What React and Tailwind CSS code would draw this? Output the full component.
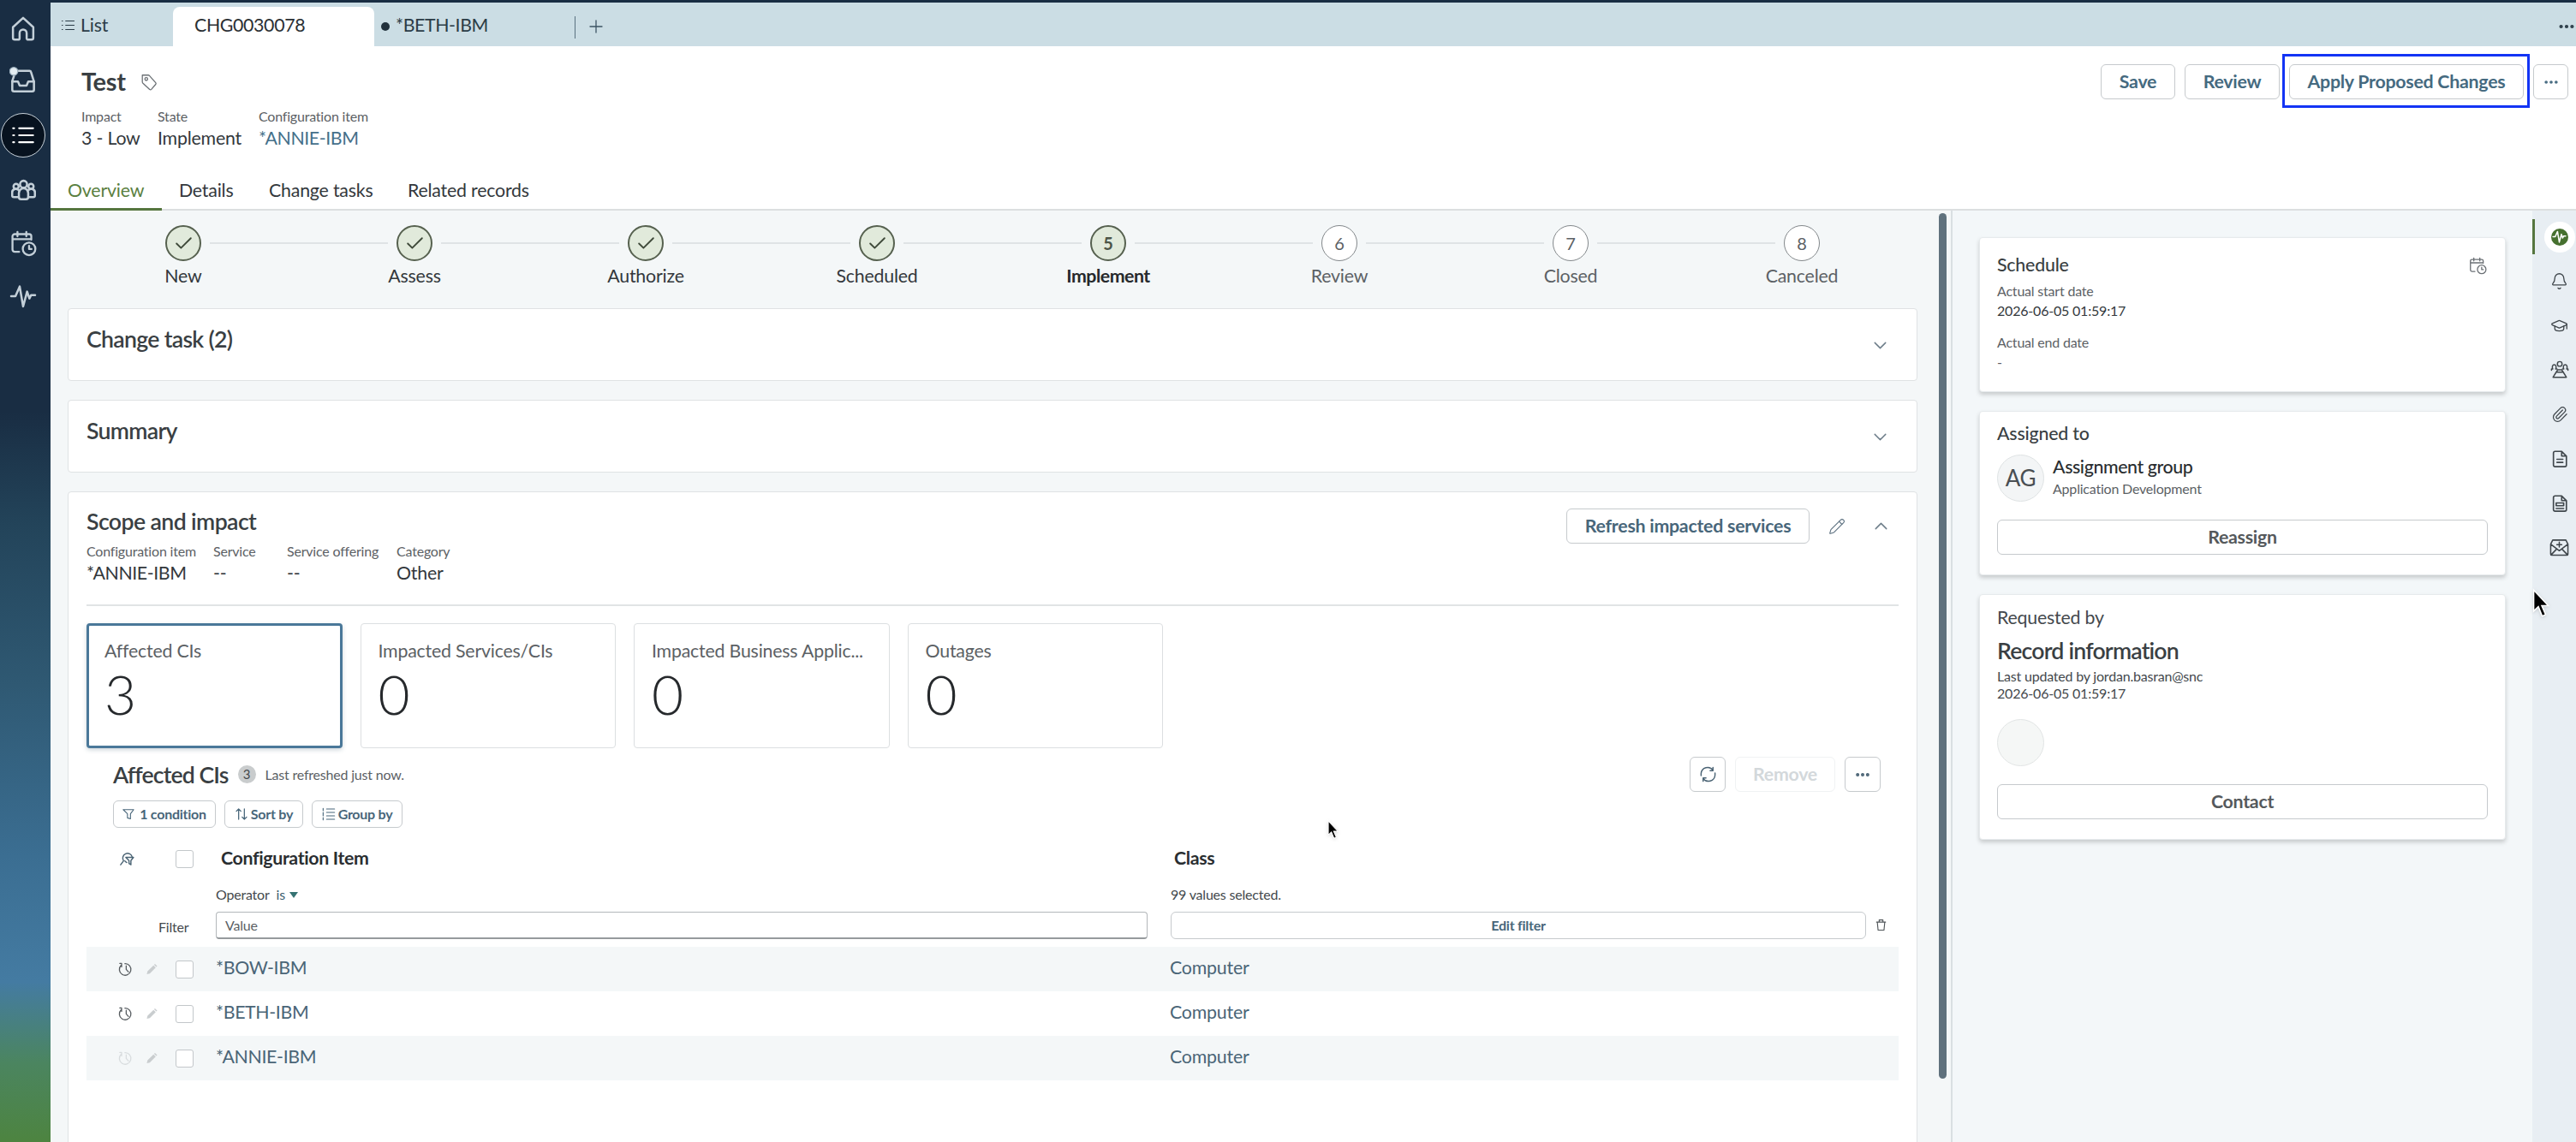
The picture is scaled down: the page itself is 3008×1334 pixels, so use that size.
import clsx from 'clsx';
import {
  Bell,
  Check,
  ChevronDown,
  ChevronUp,
  Ellipsis,
  GraduationCap,
  Paperclip,
  Pencil,
  Plus,
} from 'lucide-react';

const steps = [
  { label: 'New', state: 'done' },
  { label: 'Assess', state: 'done' },
  { label: 'Authorize', state: 'done' },
  { label: 'Scheduled', state: 'done' },
  { label: 'Implement', state: 'current' },
  { label: 'Review', state: 'next' },
  { label: 'Closed', state: 'next' },
  { label: 'Canceled', state: 'next' },
];

const counters = [
  { label: 'Affected CIs', value: 3, active: true },
  { label: 'Impacted Services/CIs', value: 0 },
  { label: 'Impacted Business Applic...', value: 0 },
  { label: 'Outages', value: 0 },
];

const rows = [
  { name: '*BOW-IBM', type: 'Computer', history: true },
  { name: '*BETH-IBM', type: 'Computer', history: true },
  { name: '*ANNIE-IBM', type: 'Computer', history: false },
];

/* Icons */
const Svg = ({ className, size = 24, width = 1.6, children, ...rest }) => (
  <svg
    className={clsx('shrink-0', className)}
    width={size}
    height={size}
    viewBox="0 0 24 24"
    fill="none"
    stroke="currentColor"
    strokeWidth={width}
    strokeLinecap="round"
    strokeLinejoin="round"
    {...rest}
  >
    {children}
  </svg>
);

const HomeIcon = () => (
  <Svg size={30} width={2}>
    <path d="M2.5 10.2 12 1.5l9.500 8.700v10a1.600 1.600 0 0 1-1.600 1.600h-3.300a1.300 1.300 0 0 1-1.300-1.300v-4.800a3.300 3.300 0 0 0-6.600 0v4.800a1.300 1.300 0 0 1-1.300 1.300H4.100a1.600 1.600 0 0 1-1.600-1.600z" />
  </Svg>
);

const InboxIcon = () => (
  <Svg size={32} width={1.9}>
    <path d="M8 3.500h9.500a1.400 1.400 0 0 1 1.400 1.100L21.500 13v7a1.500 1.500 0 0 1-1.500 1.500H4A1.500 1.500 0 0 1 2.500 20V12.500L4 8" />
    <path d="M2.500 13h5l1.500 3.500h6l1.500-3.500h5" />
    <circle cx="3.800" cy="4" r="3.500" fill="#e4edf2" stroke="#9fb2c0" strokeWidth="1" />
  </Svg>
);

const ListIcon = ({ size = 30, width = 1.9 }) => (
  <Svg size={size} width={width}>
    <path d="M8 5h14M8 12h14M8 19h14M2 5h1M2 12h1M2 19h1" />
  </Svg>
);

const TeamIcon = () => (
  <Svg size={29} width={2.1}>
    <circle cx="12" cy="6" r="3.400" />
    <circle cx="4.800" cy="8" r="2.500" />
    <circle cx="19.200" cy="8" r="2.500" />
    <path d="M7.500 18.500V14.500a4.500 4.500 0 0 1 9 0v4a2 2 0 0 1-2 2h-5a2 2 0 0 1-2-2zM7.500 18.500H2.500a1.500 1.500 0 0 1-1.500-1.500v-2.500a3.600 3.600 0 0 1 7-1.500M16.500 18.500h5a1.500 1.500 0 0 0 1.500-1.500v-2.500a3.600 3.600 0 0 0-7-1.500" />
  </Svg>
);

const CalendarClockIcon = ({ size = 31, width = 1.8 }) => (
  <Svg size={size} width={width}>
    <path d="M8 19.500H4a2 2 0 0 1-2-2V5.500a2 2 0 0 1 2-2h13a2 2 0 0 1 2 2V8.500M2 8h17M6.500 1.500v4M14.500 1.500v4" />
    <circle cx="17" cy="16.800" r="5.700" />
    <path d="M17 14V17h2.200" />
  </Svg>
);

const PulseIcon = ({ size = 32, width = 1.9 }) => (
  <Svg size={size} width={width}>
    <path d="M1.500 12h3.800L9 3.500l3 17.500 3.500-13 2 6 1.500-3h3.500" />
  </Svg>
);

const TagIcon = () => (
  <Svg size={22} width={1.4} className="text-[#6b7075]">
    <path d="M3.500 3h7.500a2 2 0 0 1 1.500.700l8 9a1.500 1.500 0 0 1 0 2l-5.500 6.500a1.500 1.500 0 0 1-2.200 0L4 13a2 2 0 0 1-.500-1.300z" />
    <circle cx="8.500" cy="8" r="1.800" />
  </Svg>
);

const HistoryIcon = () => (
  <Svg size={18} width={1.7}>
    <path d="M10.500 3.600A9 9 0 1 1 4.700 6M2.500 3.300 5.300 3.300 5.300 8.500M12.500 7v5.500l3.500 4" />
  </Svg>
);

const SearchFilterIcon = () => (
  <Svg size={18} width={1.9}>
    <path d="M2.500 21.500l4.500-6A7.500 7.500 0 1 1 20.500 9.500" />
    <path d="M10.500 10h12l-4 5v6.500l-3-2V15zM9 15.500c1 1.500 1.700 2 3 2.500" />
  </Svg>
);

const GroupRailIcon = () => (
  <Svg size={22} width={1.6}>
    <circle cx="12" cy="4.500" r="3" />
    <path d="M9.500 12h5M7.500 15h9l4 6.500H3.500zM9.500 12 7.500 15M14.500 12l2 3" />
    <path d="M1.500 12.500V11h1.700C1.700 8 3 5.500 5 5.500S8.200 8 6.800 11h1.700M22.500 12.500V11h-1.700C22.300 8 21 5.500 19 5.500S15.800 8 17.200 11h-1.700" />
  </Svg>
);

const DocIcon = ({ table }) => (
  <Svg size={22} width={1.8}>
    <path d="M6 2.500h8.500l6 6V20a2 2 0 0 1-2 2H6a2 2 0 0 1-2-2V4.500a2 2 0 0 1 2-2zM14.500 2.500v6h6" />
    {table ? <path d="M7.500 11.500h9.500v3.500H7.500zM7.500 18.500h9.500" /> : <path d="M8.500 12.500h7.500M8.500 16.500h7.500" />}
  </Svg>
);

const MailPlusIcon = () => (
  <Svg size={23} width={1.6}>
    <path d="M1.500 8v12a1.500 1.500 0 0 0 1.500 1.500h18a1.500 1.500 0 0 0 1.500-1.500V8L20 3H4zM1.500 8 12 16 22.500 8M2 21 9 13.700M22 21l-7-7.300M12 5.500v6M9 8.500h6" />
  </Svg>
);

const Cursor = ({ className }) => (
  <svg className={className} viewBox="0 0 20 34" fill="#000" stroke="#fff" strokeWidth="1.500">
    <path d="M1.500 2v23.500l5.200-5 4.300 10.500 3.800-1.700-4.300-10h7.300z" />
  </svg>
);

const Button = ({ className, children }) => (
  <button
    className={clsx(
      'flex items-center justify-center border border-[#c6cacd] bg-white font-bold tracking-[-0.25px]',
      className
    )}
  >
    {children}
  </button>
);

const Meta = ({ label, value, className, valueClass }) => (
  <div className={className}>
    <p className="text-base leading-5 text-[#5c6165]">{label}</p>
    <p className={clsx('mt-[1px] text-[21.33px] leading-7', valueClass || 'text-[#33383c]')}>{value}</p>
  </div>
);

const Checkbox = () => (
  <span className="block h-[21px] w-[21px] rounded-[3px] border border-[#c3c7ca] bg-white" />
);

const Sidebar = () => (
  <aside className="flex w-[59px] shrink-0 flex-col items-center bg-[linear-gradient(180deg,#192d43_0%,#192d43_36%,#23445a_46%,#2f5973_60%,#3b6e92_75%,#447ba2_86%,#4b8560_93%,#4d8440_100%)] pr-[5px] text-[#c3cfd8]">
    <div className="flex h-[66px] items-center pt-0.5"><HomeIcon /></div>
    <div className="flex h-[56px] items-center"><InboxIcon /></div>
    <div className="mt-[10px] flex h-[52px] w-[52px] items-center justify-center rounded-full border-[1.5px] border-[#c8d2da] bg-[#07121f] text-white">
      <ListIcon size={28} />
    </div>
    <div className="mt-[9px] flex h-[58px] items-center"><TeamIcon /></div>
    <div className="flex h-[66px] items-center"><CalendarClockIcon /></div>
    <div className="flex h-[58px] items-center"><PulseIcon /></div>
  </aside>
);

const TabStrip = () => (
  <div className="flex h-[54px] border-t-[3px] border-[#192d43] bg-[#cbdde4] text-[21.33px] text-[#2b3c47]">
    <div className="flex w-[143px] items-center gap-[6px] pt-0.5 pl-3 text-[#2b3c47]">
      <ListIcon size={17} width={1.5} />
      <span>List</span>
    </div>
    <div className="mt-[5px] flex w-[235px] items-center rounded-t-lg bg-white pb-[3px] pl-[25px] tracking-[-0.35px] text-[#2b3034]">
      CHG0030078
    </div>
    <div className="flex w-[234px] items-center pt-0.5 pl-2">
      <span className="mt-0.5 mr-[7px] h-[10px] w-[10px] rounded-full bg-[#22313c]" />
      <span className="tracking-[-0.4px]">*BETH-IBM</span>
    </div>
    <div className="mt-[16px] h-[26px] w-px bg-[#5b7180]" />
    <Plus size={24} strokeWidth={1.3} className="mt-[16px] ml-[12px] text-[#3d5463]" />
    <Ellipsis size={22} strokeWidth={2.6} className="mt-[17px] ml-auto" />
  </div>
);

const RecordHeader = () => (
  <header className="h-[192px] border-b-2 border-[#dcdfe0] bg-white pt-[21px]">
    <div className="flex h-[41px] items-center pl-9 pr-[9px]">
      <h1 className="mr-[16px] pb-0.5 text-[29px] font-bold leading-none tracking-[-0.3px] text-[#3a3f43]">Test</h1>
      <TagIcon />
      <div className="ml-auto flex h-[41px] gap-[11px] text-[21.33px] text-[#456a80]">
        <Button className="w-[87px] rounded-[6px]">Save</Button>
        <Button className="w-[111px] rounded-[6px]">Review</Button>
        <div className="relative flex">
          <Button className="w-[274px] rounded-[6px]">Apply Proposed Changes</Button>
          <span className="absolute -top-3 -left-2 h-[63px] w-[289px] border-[3px] border-[#1334f5]" />
        </div>
        <Button className="w-[41px] rounded-[6px]"><Ellipsis size={20} strokeWidth={2.4} /></Button>
      </div>
    </div>
    <div className="mt-[10px] flex pl-9">
      <Meta label="Impact" value="3 - Low" className="w-[89px]" />
      <Meta label="State" value="Implement" className="w-[118px]" />
      <Meta label="Configuration item" value="*ANNIE-IBM" valueClass="text-[#45708a] tracking-[-0.4px]" />
    </div>
    <nav className="mt-[25px] flex h-[46px] text-[21.33px] text-[#33383c]">
      <a className="flex w-[130px] items-center border-b-[3px] border-[#56763f] pl-5 pt-[3px] text-[#5a8040]">Overview</a>
      <a className="flex w-[105px] items-center pl-5">Details</a>
      <a className="flex w-[162px] items-center pl-5">Change tasks</a>
      <a className="flex items-center pl-5">Related records</a>
    </nav>
  </header>
);

const Stepper = () => (
  <div className="grid w-[2160px] grid-cols-8 pt-[17px]">
    {steps.map((step, i) => (
      <div key={step.label} className="relative flex flex-col items-center">
        <span
          className={clsx(
            'flex h-[42px] w-[42px] items-center justify-center rounded-full text-[20px]',
            step.state === 'done' && 'border-2 border-[#56614f] bg-[#e1eadb] text-[#3f4a3a]',
            step.state === 'current' && 'border-2 border-[#56614f] bg-[#e1eadb] font-bold text-[#4c5547]',
            step.state === 'next' && 'border-[1.5px] border-[#83888b] bg-white text-[#5c6165]'
          )}
        >
          {step.state === 'done' ? <Check size={25} strokeWidth={1.8} /> : i + 1}
        </span>
        <span
          className={clsx(
            'mt-[4px] text-[21.33px] leading-[26px]',
            step.state === 'done' && 'text-[#33383c]',
            step.state === 'current' && 'font-bold tracking-[-0.5px] text-[#26292c]',
            step.state === 'next' && 'text-[#5c6165]'
          )}
        >
          {step.label}
        </span>
        {i < steps.length - 1 && (
          <span className="absolute top-[20px] left-[166px] h-0.5 w-[208px] bg-[#dfe3e5]" />
        )}
      </div>
    ))}
  </div>
);

const CollapsedCard = ({ title }) => (
  <section className="flex h-[85px] justify-between rounded border border-[#dfe2e4] bg-white pl-[21px] pr-[30px]">
    <h2 className="pt-[19px] text-[26.67px] font-semibold leading-8 tracking-[-0.7px] text-[#3a3f43]">{title}</h2>
    <ChevronDown size={25} strokeWidth={1.4} className="mt-[30px] text-[#6d7d89]" />
  </section>
);

const AffectedTable = () => (
  <div>
    <div className="flex h-[50px] items-center pl-[31px] pr-[21px] pt-[11px]">
      <h3 className="text-[26.67px] font-semibold leading-8 tracking-[-0.9px] text-[#3a3f43]">Affected CIs</h3>
      <span className="ml-[11px] flex h-[21px] w-[21px] items-center justify-center rounded-full bg-[#c9cccd] text-[15px] text-[#45494c]">3</span>
      <span className="ml-[11px] text-base text-[#5c6165]">Last refreshed just now.</span>
      <div className="ml-auto flex h-[41px] gap-[11px] text-[21.33px] text-[#4a6374]">
        <Button className="w-[42px] rounded-[6px]">
          <Svg size={23} width={1.5}>
            <path d="M3.500 13.500V11A8 8 0 0 1 18 7M14.500 7.500H18V3.500M20.500 10.500V13A8 8 0 0 1 6 17M9.500 16.500H6v4" />
          </Svg>
        </Button>
        <Button className="w-[117px] rounded-[6px] border-[#f0f2f3] text-[#d3d8db]">Remove</Button>
        <Button className="w-[42px] rounded-[6px]"><Ellipsis size={20} strokeWidth={2.8} /></Button>
      </div>
    </div>
    <div className="mt-[11px] flex h-8 gap-[10px] pl-[31px] text-base text-[#48667a]">
      <Button className="w-[120px] gap-[6px] rounded-[6px]">
        <Svg size={14} width={1.9}><path d="M1.500 3h21l-6.500 8.500V21.500l-6-2v-8z" /></Svg>
        1 condition
      </Button>
      <Button className="w-[92px] gap-[3px] rounded-[6px]">
        <Svg size={16} width={1.900}><path d="M7 21V3M3 7l4-4 4 4M17 3v18M13 17l4 4 4-4" /></Svg>
        Sort by
      </Button>
      <Button className="w-[106px] gap-[3px] rounded-[6px]">
        <Svg size={16} width={1.700}><path d="M8 3h14M8 9h14M8 15h14M8 21h14M2 2v4M2 9v6M2 18v4" /></Svg>
        Group by
      </Button>
    </div>

    {/* Column headings */}
    <div className="mt-[14px] flex h-[44px] items-center text-[21.33px] font-bold tracking-[-0.35px] text-[#2a2e31]">
      <span className="w-[104px] pl-[38px] text-[#4a6374]">
        <SearchFilterIcon />
      </span>
      <Checkbox />
      <span className="w-[1114px] pl-[32px]">Configuration Item</span>
      <span className="pl-[31px]">Class</span>
    </div>

    {/* Filter row */}
    <div className="flex text-base text-[#44494d]">
      <div className="w-[151px] pt-[48px] pl-[84px] leading-5">Filter</div>
      <div className="w-[1088px]">
        <p className="mt-[10px] flex h-5 items-center">
          Operator
          <span className="ml-[8px] text-[#3c6070]">is</span>
          <svg className="mt-px ml-[5px] text-[#357373]" width="10" height="7" viewBox="0 0 10 7">
            <path d="M0 0h10L5 7z" fill="currentColor" />
          </svg>
        </p>
        <div className="mt-[10px] flex h-8 items-center rounded border border-b-2 border-[#b3b7ba] border-b-[#969a9d] pl-[10px] text-[#5c6165]">Value</div>
      </div>
      <div className="ml-[27px] w-[812px]">
        <p className="mt-[10px] h-5 leading-5">99 values selected.</p>
        <Button className="mt-[10px] h-8 w-full rounded-[6px] border-[#b9bdc0] text-[#48667a]">Edit filter</Button>
      </div>
      <Svg size={15} width={1.800} className="mt-[48px] ml-[10px] text-[#4f5458]">
        <path d="M3.500 6.500h17M5 6.500l1.500 15h11L19 6.500M8.500 6V2.500h7V6" />
      </Svg>
    </div>

    <div className="mt-[9px]">
      {rows.map((row, i) => (
        <div
          key={row.name}
          className={clsx('flex h-[52px] items-center text-[21.33px] text-[#4a6577]', i % 2 === 0 && 'bg-[#f4f7f8]')}
        >
          <span className={clsx('w-[70px] pl-[37px]', row.history ? 'text-[#565b5f]' : 'text-[#d8dcde]')}>
            <HistoryIcon />
          </span>
          <span className="w-[34px] text-[#c9cdcf]">
            <svg width="13" height="14" viewBox="0 0 15 15" fill="currentColor">
              <path d="M0.500 14.500 1.500 10.500 9.500 2.500 12.500 5.500 4.500 13.500zM10.300 1.700l1.200-1.200 3 3-1.200 1.200z" />
            </svg>
          </span>
          <Checkbox />
          <span className="w-[1114px] pb-[3px] pl-[26px] tracking-[-0.35px]">{row.name}</span>
          <span className="pb-[3px] pl-[26px]">{row.type}</span>
        </div>
      ))}
    </div>
  </div>
);

const ScopeCard = () => (
  <section className="h-[800px] rounded-t border border-[#dfe2e4] bg-white pl-[21px] pr-[21px]">
    <div className="flex h-[133px] justify-between border-b-2 border-[#e1e4e5]">
      <div className="pt-[18px]">
        <h2 className="text-[26.67px] font-semibold leading-8 tracking-[-0.6px] text-[#3a3f43]">Scope and impact</h2>
        <div className="mt-[9px] flex">
          <Meta label="Configuration item" value="*ANNIE-IBM" className="w-[148px]" valueClass="text-[#33383c] tracking-[-0.4px]" />
          <Meta label="Service" value="--" className="w-[86px]" />
          <Meta label="Service offering" value="--" className="w-[128px]" />
          <Meta label="Category" value="Other" />
        </div>
      </div>
      <div className="mt-[19px] mr-[8px] flex h-[41px] items-center">
        <Button className="h-[41px] w-[284px] rounded-[6px] text-[21.33px] text-[#48667a]">Refresh impacted services</Button>
        <Pencil size={20} strokeWidth={1.3} className="ml-[22px] text-[#5d7180]" />
        <ChevronUp size={25} strokeWidth={1.4} className="ml-[29px] text-[#6d7d89]" />
      </div>
    </div>
    <div className="mt-5 flex gap-[21px]">
      {counters.map((c) => (
        <div
          key={c.label}
          className={clsx(
            'h-[146px] w-[298.500px] rounded bg-white',
            c.active
              ? 'border-[3px] border-[#4a7899] px-[18px] pt-[15px] shadow-[0_2px_5px_rgba(60,90,110,0.25)]'
              : 'border border-[#dcdfe1] px-5 pt-[17px]'
          )}
        >
          <p className="whitespace-nowrap text-[21.33px] leading-7 text-[#5c6165]">{c.label}</p>
          <p className="mt-1 text-[64px] font-light leading-[66px] text-[#26292c]">{c.value}</p>
        </div>
      ))}
    </div>
    <AffectedTable />
  </section>
);

const InfoPanel = () => (
  <div className="flex w-[679px] shrink-0 flex-col gap-[22px] border-l-2 border-[#d9dfe2] bg-[#f3f7f9] pt-[31px] pl-[31px]">
    <section className="relative h-[181px] w-[615px] rounded border border-[#e6eaec] bg-white px-5 pt-[17px] shadow-[0_3px_5px_rgba(0,0,0,0.18)]">
      <h2 className="text-[21.33px] font-medium leading-7 text-[#3a3f43]">Schedule</h2>
      <div className="mt-[7px] text-base leading-5 text-[#5c6165]">Actual start date</div>
      <div className="mt-[3px] text-base leading-5 text-[#33383c]">2026-06-05 01:59:17</div>
      <div className="mt-[17px] text-base leading-5 text-[#5c6165]">Actual end date</div>
      <div className="mt-[3px] text-base leading-5 text-[#5c6165]">-</div>
      <span className="absolute top-[22px] right-[21px] text-[#6b7075]">
        <CalendarClockIcon size={21} width={1.5} />
      </span>
    </section>

    <section className="h-[192px] w-[615px] rounded border border-[#e6eaec] bg-white px-5 pt-[11px] shadow-[0_3px_5px_rgba(0,0,0,0.18)]">
      <h2 className="text-[21.33px] font-medium leading-7 text-[#3a3f43]">Assigned to</h2>
      <div className="mt-[11px] flex h-[55px]">
        <span className="flex h-[55px] w-[55px] items-center justify-center rounded-full border border-[#dfe3e4] bg-[#f3f5f6] text-[26px] text-[#4a4f53]">AG</span>
        <div className="ml-[10px]">
          <p className="text-[21.33px] font-medium leading-7 tracking-[-0.4px] text-[#2a2e31]">Assignment group</p>
          <p className="mt-[2px] text-base leading-5 text-[#5c6165]">Application Development</p>
        </div>
      </div>
      <Button className="mt-[21px] h-[41px] w-full rounded-[6px] text-[21.33px] text-[#55595c]">Reassign</Button>
    </section>

    <section className="h-[287px] w-[615px] rounded border border-[#e6eaec] bg-white px-5 pt-[12px] shadow-[0_3px_5px_rgba(0,0,0,0.18)]">
      <h2 className="text-[21.33px] leading-7 text-[#44494d]">Requested by</h2>
      <h3 className="mt-[9px] text-[26.67px] font-semibold leading-8 tracking-[-0.8px] text-[#3a3f43]">Record information</h3>
      <p className="mt-[4px] text-base leading-5 text-[#44494d]">Last updated by jordan.basran@snc</p>
      <p className="text-base leading-5 text-[#44494d]">2026-06-05 01:59:17</p>
      <span className="mt-[20px] block h-[55px] w-[55px] rounded-full border border-[#e2e5e5] bg-[#f5f7f6]" />
      <Button className="mt-[21px] h-[41px] w-full rounded-[6px] text-[21.33px] text-[#55595c]">Contact</Button>
    </section>
  </div>
);

const Rail = () => (
  <div className="relative flex w-[51px] shrink-0 flex-col bg-[#e8eef3] pl-3 pt-[5px] text-[#3f464b]">
    <span className="absolute top-[10px] left-0 h-[41px] w-[3px] bg-[#56763f]" />
    {[
      <span key="pulse" className="flex h-9 w-9 shrink-0 items-center justify-center rounded-full bg-white">
        <span className="flex h-5 w-5 items-center justify-center rounded-full bg-[#46702f] text-white">
          <PulseIcon size={17} width={2.2} />
        </span>
      </span>,
      <Bell key="bell" size={21} strokeWidth={1.500} />,
      <GraduationCap key="learn" size={21} strokeWidth={1.500} />,
      <GroupRailIcon key="group" />,
      <Paperclip key="clip" size={20} strokeWidth={1.500} />,
      <DocIcon key="doc" />,
      <DocIcon key="table" table />,
      <MailPlusIcon key="mail" />,
    ].map((icon) => (
      <div key={icon.key} className="flex h-[51.800px] items-center justify-center">{icon}</div>
    ))}
    <Cursor className="absolute top-[441px] left-0 h-[36px] w-[21px] drop-shadow" />
  </div>
);

export default function App() {
  return (
    <div className="relative flex h-[1334px] w-[3008px] overflow-hidden bg-white font-[Lato,sans-serif] tracking-[-0.2px]">
      <Sidebar />
      <div className="flex min-w-0 flex-1 flex-col">
        <TabStrip />
        <RecordHeader />
        <div className="flex min-h-0 flex-1">
          {/* Record form */}
          <main className="flex flex-1 overflow-hidden bg-[#f4f7f8] pl-5">
            <div>
              <Stepper />
              <div className="mt-[25px] flex flex-col gap-[22px]">
                <CollapsedCard title="Change task (2)" />
                <CollapsedCard title="Summary" />
                <ScopeCard />
              </div>
            </div>
            <div className="mt-[3px] ml-[25px] h-[1011px] w-[9px] rounded-full bg-[#5f717d]" />
          </main>
          <InfoPanel />
          <Rail />
        </div>
      </div>
      <Cursor className="absolute top-[957px] left-[1550px] h-[25px] w-[14px] drop-shadow" />
    </div>
  );
}
